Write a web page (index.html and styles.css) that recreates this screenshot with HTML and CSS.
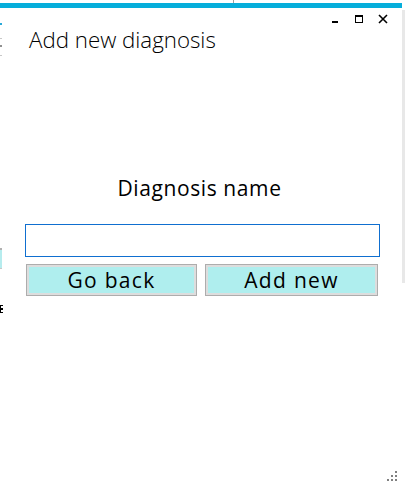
FILE: index.html
```html
<!DOCTYPE html>
<html>
<head>
<meta charset="utf-8">
<link rel="stylesheet" href="styles.css">
</head>
<body>
<div class="screen">
  <div class="topstrip"><span class="topline"></span></div>
  <div class="row">
    <div class="window">
      <div class="accent"></div>
      <div class="winbody">
        <div class="gutter">
          <span class="mark m1"></span>
          <span class="mark m2"></span>
          <span class="mark m3"></span>
          <span class="mark m4"></span>
          <span class="ghostbtn"></span>
          <span class="ghostglyph"><span class="gbar"></span><span class="gtop"></span><span class="gmid"></span><span class="gbot"></span></span>
        </div>
        <div class="content">
          <div class="controls">
            <svg class="ctl" width="10" height="10" viewBox="0 0 10 10"><rect x="2" y="7" width="6" height="2" fill="#000"/></svg>
            <svg class="ctl" width="10" height="10" viewBox="0 0 10 10"><rect x="1.5" y="1.5" width="7" height="7" fill="none" stroke="#000" stroke-width="1"/><rect x="1" y="1" width="8" height="2" fill="#000"/></svg>
            <svg class="ctl" width="10" height="10" viewBox="0 0 10 10"><path d="M1 1 L9 9 M9 1 L1 9" stroke="#000" stroke-width="1.6" fill="none"/></svg>
          </div>
          <div class="title">Add new diagnosis</div>
          <div class="form">
            <div class="label">Diagnosis name</div>
            <div class="input"></div>
            <div class="buttons">
              <div class="btn back">Go back</div>
              <div class="btn add">Add new</div>
            </div>
          </div>
          <div class="grip">
            <svg width="10" height="10" viewBox="0 0 10 10" fill="#808080">
              <rect x="8" y="0" width="2" height="2"/>
              <rect x="4" y="4" width="2" height="2"/><rect x="8" y="4" width="2" height="2"/>
              <rect x="0" y="8" width="2" height="2"/><rect x="4" y="8" width="2" height="2"/><rect x="8" y="8" width="2" height="2"/>
            </svg>
          </div>
        </div>
      </div>
    </div>
    <div class="side"><span class="scrollbar"></span></div>
  </div>
</div>
</body>
</html>
```

FILE: styles.css
```css
html, body {
  margin: 0;
  padding: 0;
  background: #ffffff;
}
.screen {
  width: 409px;
  height: 490px;
  display: flex;
  flex-direction: column;
  overflow: hidden;
}
.topstrip {
  height: 3px;
  position: relative;
  flex: none;
}
.topline {
  position: absolute;
  left: 233px;
  top: 0;
  width: 1px;
  height: 3px;
  background: #a0a0a0;
}
.row {
  display: flex;
  flex: 1;
}
.window {
  width: 402px;
  display: flex;
  flex-direction: column;
  flex: none;
}
.accent {
  height: 5px;
  background: #06aedb;
  flex: none;
}
.winbody {
  flex: 1;
  display: flex;
  background: #ffffff;
}
.gutter {
  width: 3px;
  position: relative;
  flex: none;
}
.mark {
  position: absolute;
  left: 0;
  width: 2px;
  height: 1px;
  background: #c8c8c8;
}
.m1 { top: 15px; background: #2aa9d8; height: 2px; }
.m2 { top: 30px; }
.m3 { top: 37px; height: 2px; background: #909090; }
.m4 { top: 47px; }
.ghostbtn {
  position: absolute;
  left: 0;
  top: 240px;
  width: 2px;
  height: 18px;
  background: #b6ecee;
  border-top: 2px solid #b0b0b0;
  border-bottom: 1px solid #c8c8c8;
}
.ghostglyph {
  position: absolute;
  left: 0;
  top: 297px;
  width: 3px;
  height: 8px;
}
.ghostglyph span {
  position: absolute;
  background: #000;
}
.gbar { left: 0; top: 0; width: 1px; height: 8px; }
.gtop { left: 0; top: 0; width: 3px; height: 1px; }
.gmid { left: 0; top: 3px; width: 3px; height: 2px; }
.gbot { left: 0; top: 7px; width: 3px; height: 1px; }
.content {
  flex: 1;
  position: relative;
  display: flex;
  flex-direction: column;
}
.controls {
  display: flex;
  justify-content: flex-end;
  gap: 14px;
  padding: 6px 14px 0 0;
  height: 10px;
}
.ctl { display: block; }
.title {
  font-family: "Open Sans", sans-serif;
  font-weight: 300;
  font-size: 22.3px;
  line-height: 24px;
  color: #000;
  margin: 4px 0 0 26px;
}
.form {
  display: flex;
  flex-direction: column;
  margin: 0 0 0 22px;
  width: 355px;
}
.label {
  font-family: "Open Sans", sans-serif;
  font-size: 21px;
  letter-spacing: 0.6px;
  line-height: 24px;
  text-align: center;
  margin-top: 124px;
  padding-right: 6px;
  color: #000;
}
.input {
  margin-top: 24px;
  height: 31px;
  border: 1px solid #0f6fd0;
  background: #fff;
}
.buttons {
  display: flex;
  gap: 8px;
  margin-top: 7px;
  padding: 0 1px;
}
.btn {
  height: 30px;
  border: 1px solid #adadad;
  box-shadow: inset 0 0 0 2px #dddddd;
  background: #afeeee;
  font-family: "Open Sans", sans-serif;
  font-size: 21px;
  letter-spacing: 1.3px;
  line-height: 30px;
  text-align: center;
  color: #000;
}
.back { width: 169px; }
.add { width: 171px; }
.grip {
  position: absolute;
  right: 5px;
  bottom: 9px;
  line-height: 0;
}
.side {
  flex: 1;
  position: relative;
}
.scrollbar {
  position: absolute;
  left: 0;
  top: 7px;
  width: 3px;
  height: 273px;
  background: #e8e8e8;
}
```
